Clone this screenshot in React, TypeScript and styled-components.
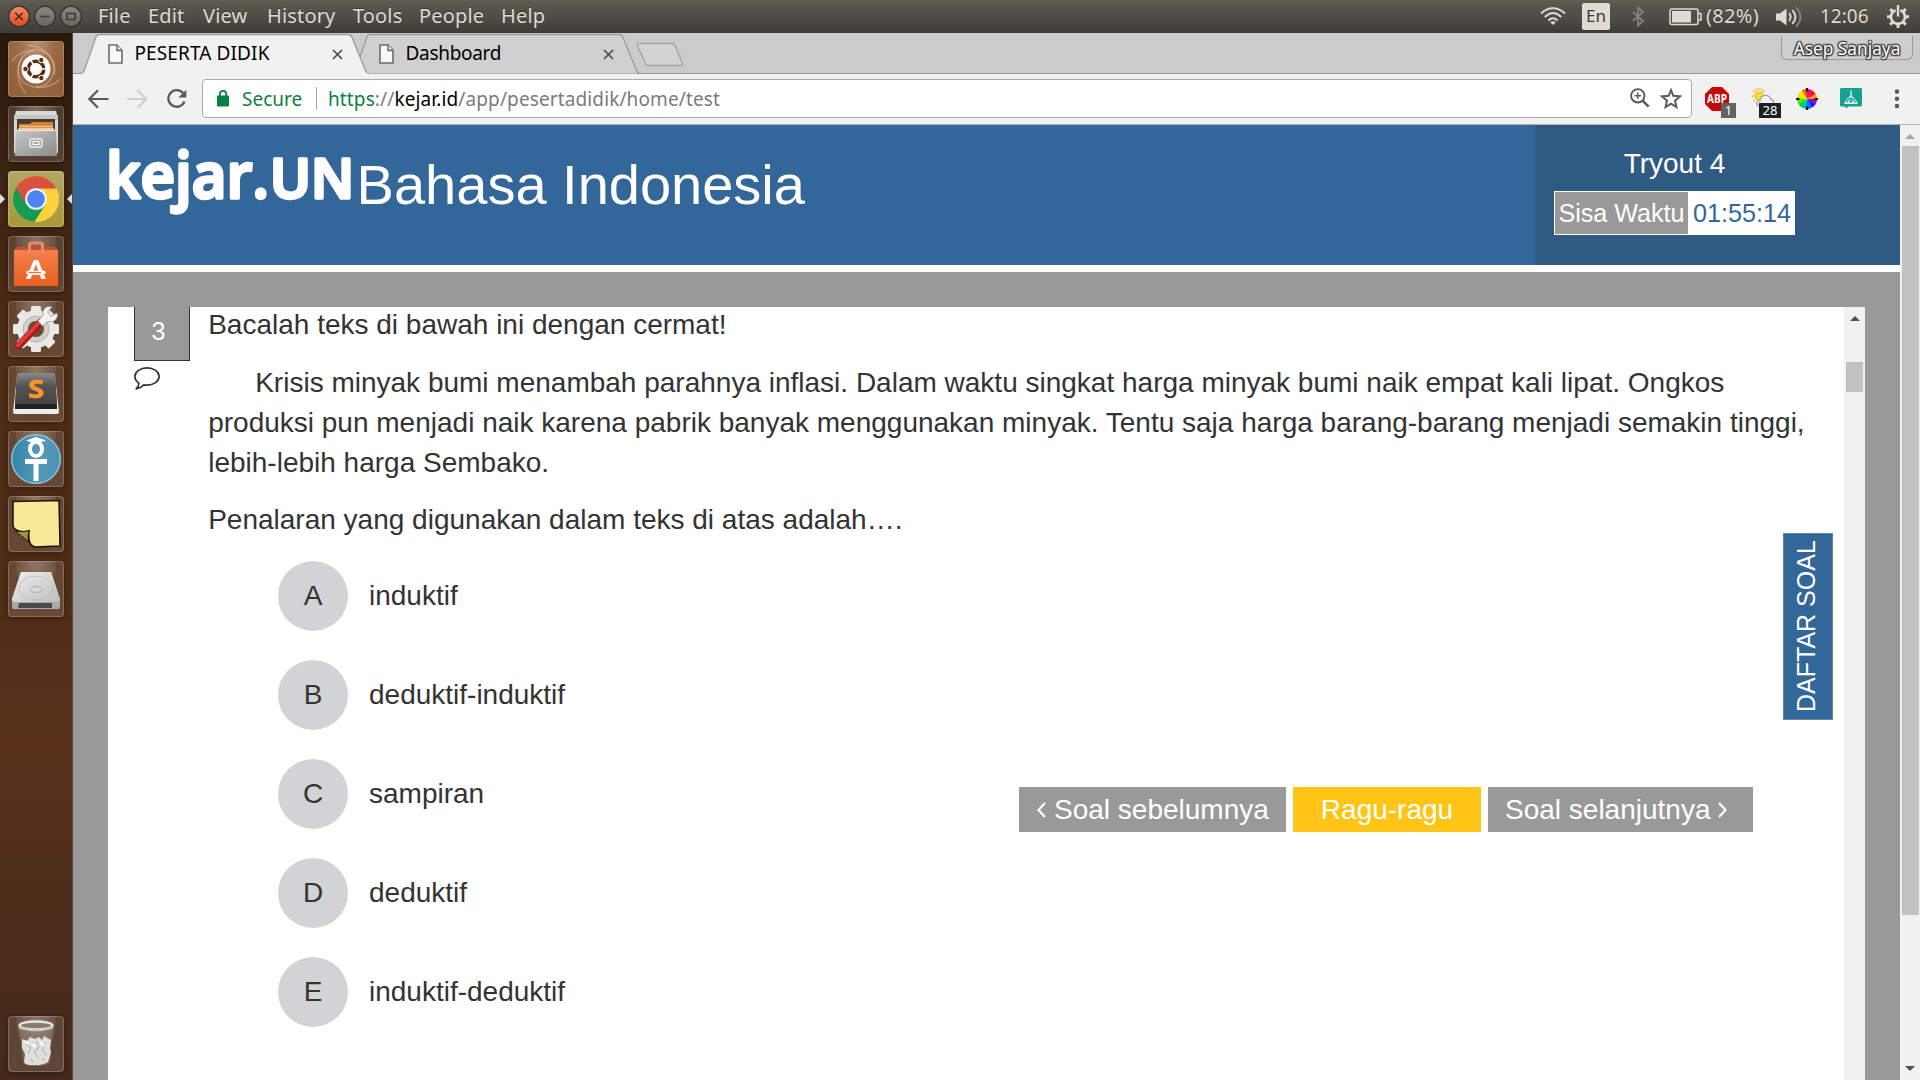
import React from "react";
import styled, { createGlobalStyle, css } from "styled-components";

const uiFont = css`
  font-family: "Noto Sans", "Open Sans", sans-serif;
`;

const Global = createGlobalStyle`
  * { box-sizing: border-box; }
  html, body { margin: 0; padding: 0; overflow: hidden; }
  body { font-family: "Liberation Sans", Arial, sans-serif; background: #fff; }
  button { border: 0; margin: 0; padding: 0; background: none; font: inherit; color: inherit; }
  svg { display: block; flex: none; }
`;

const Desktop = styled.div`
  width: 1920px;
  height: 1080px;
  display: flex;
  flex-direction: column;
  overflow: hidden;
`;

/* ---------- top panel ---------- */

const Panel = styled.header`
  ${uiFont}
  flex: none;
  height: 33px;
  display: flex;
  align-items: center;
  justify-content: space-between;
  padding: 0 11px 0 8px;
  background: linear-gradient(#5f5e50 0%, #5a594d 8%, #4c4a45 60%, #3d3c37 100%);
  color: #dfdbd2;
  text-shadow: 0 -1px 0 rgba(0, 0, 0, 0.35);
`;

const PanelLeft = styled.div`
  display: flex;
  align-items: center;
`;

const WindowButtons = styled.div`
  display: flex;
  gap: 4px;
  margin-right: 16px;
`;

const Menu = styled.nav`
  display: flex;
`;

const MenuItem = styled.span<{ $w: number }>`
  width: ${(p) => p.$w}px;
  font-size: 20px;
  line-height: 30px;
  padding-bottom: 2px;
  letter-spacing: 0.15px;
  white-space: nowrap;
`;

const Tray = styled.div`
  display: flex;
  align-items: center;
`;

const TraySlot = styled.div<{ $w: number }>`
  width: ${(p) => p.$w}px;
  display: flex;
  align-items: center;
  font-size: 19px;
  line-height: 30px;
  white-space: nowrap;
`;

const TrayText = styled.span<{ $size: number; $ls?: number }>`
  padding-bottom: 2px;
  font-size: ${(p) => p.$size}px;
  letter-spacing: ${(p) => p.$ls || 0}px;
`;

const InputBadge = styled.span`
  width: 28px;
  height: 27px;
  border-radius: 2px;
  background: #dfdbd2;
  color: #3c3b37;
  font-size: 17px;
  line-height: 26px;
  text-align: center;
  text-shadow: none;
`;

/* ---------- launcher ---------- */

const Workspace = styled.div`
  flex: 1;
  min-height: 0;
  display: flex;
`;

const Launcher = styled.aside`
  flex: none;
  width: 73px;
  display: flex;
  flex-direction: column;
  justify-content: space-between;
  padding: 8px 8px;
  border-right: 1px solid #58483f;
  background: linear-gradient(#2a190e 0%, #3b2313 12%, #4e2c16 30%, #502d18 55%, #58301a 68%, #4b2d1b 85%, #452a1b 100%);
`;

const LauncherGroup = styled.div`
  display: flex;
  flex-direction: column;
  gap: 9px;
`;

const Tile = styled.div<{ $bg?: string }>`
  position: relative;
  width: 56px;
  height: 56px;
  border-radius: 4px;
  background: ${(p) =>
    p.$bg ||
    "radial-gradient(ellipse at 50% 0%, rgba(255,240,230,.38) 0%, rgba(255,240,230,.2) 50%, rgba(255,240,230,.13) 51%, rgba(255,240,230,.15) 100%)"};
  box-shadow: inset 0 0 0 1px rgba(255, 255, 255, 0.2), 0 1px 5px rgba(0, 0, 0, 0.4);
`;

const Pip = styled.i<{ $side: "left" | "right" }>`
  position: absolute;
  top: 23px;
  ${(p) => (p.$side === "left" ? "left: -8px;" : "right: -8px;")}
  border: 5px solid transparent;
  border-width: 5px 0;
  ${(p) => (p.$side === "left" ? "border-left: 5px solid #e3e0dc;" : "border-right: 5px solid #e3e0dc;")}
`;

/* ---------- browser ---------- */

const Browser = styled.section`
  flex: 1;
  min-width: 0;
  display: flex;
  flex-direction: column;
`;

const TabStrip = styled.div`
  ${uiFont}
  flex: none;
  height: 41px;
  display: flex;
  justify-content: space-between;
  background: #cbcbcb;
  box-shadow: inset 0 -1px 0 #989898;
`;

const Tabs = styled.div`
  display: flex;
  padding-left: 8px;
`;

const Tab = styled.div<{ $active?: boolean }>`
  position: relative;
  z-index: ${(p) => (p.$active ? 1 : 0)};
  width: 288px;
  height: 41px;
  margin-right: -17px;
  display: flex;
  align-items: center;
  padding: 1px 26px 0 27px;
`;

const TabShape = styled.svg`
  position: absolute;
  left: 0;
  top: 0;
  z-index: -1;
`;

const TabTitle = styled.span<{ $ls: number }>`
  flex: 1;
  margin-left: 11.5px;
  padding-bottom: 2px;
  font-size: 19px;
  letter-spacing: ${(p) => p.$ls}px;
  color: #000;
`;

const NewTab = styled.svg`
  margin: 9px 0 0 13px;
`;

const Profile = styled.div`
  width: 132px;
  height: 24px;
  margin: 3px 7px 0 0;
  border: 1px solid #999;
  border-top: 0;
  border-radius: 0 0 6px 6px;
  background: #cecece;
  color: #fff;
  font-size: 17.3px;
  line-height: 25px;
  text-align: center;
  white-space: nowrap;
  text-shadow: 0 0 2px #333, 0 0 2px #333, 1px 1px 1px #444, -1px -1px 1px #444, 1px -1px 1px #444, -1px 1px 1px #444;
`;

const Toolbar = styled.div`
  ${uiFont}
  flex: none;
  height: 51px;
  display: flex;
  align-items: center;
  padding: 0 18px 1px 15px;
  background: #f1f1f1;
  border-bottom: 1px solid #b3b3b3;
`;

const NavButtons = styled.div`
  display: flex;
  align-items: center;
  gap: 18px;
  width: 114px;
`;

const UrlBar = styled.div`
  flex: none;
  width: 1490px;
  height: 39px;
  display: flex;
  align-items: center;
  padding: 0 9px 0 14px;
  border: 1px solid #aaa;
  border-radius: 4px;
  background: #fff;
  font-size: 19px;
  line-height: 36px;
  white-space: nowrap;
`;

const Secure = styled.span`
  width: 74px;
  margin-left: 13px;
  color: #0b8043;
`;

const UrlDivider = styled.i`
  width: 1px;
  height: 23px;
  margin-right: 11px;
  background: #a5a5a5;
`;

const Url = styled.span`
  flex: 1;
  color: #7b7b7b;
  letter-spacing: 0.12px;
`;
const UrlScheme = styled.span`
  color: #0b8043;
`;
const UrlHost = styled.span`
  color: #000;
`;

const UrlIcons = styled.div`
  display: flex;
  gap: 10px;
`;

const Extensions = styled.div`
  flex: 1;
  display: flex;
  align-items: center;
  margin-left: 13px;
`;

const Extension = styled.div<{ $w: number }>`
  position: relative;
  width: ${(p) => p.$w}px;
`;

const Badge = styled.span<{ $bg: string; $x: number; $w: number }>`
  position: absolute;
  left: ${(p) => p.$x}px;
  top: 16px;
  width: ${(p) => p.$w}px;
  height: 15px;
  background: ${(p) => p.$bg};
  color: #fff;
  font-size: 13px;
  line-height: 15px;
  text-align: center;
`;

/* ---------- page ---------- */

const Viewport = styled.div`
  flex: 1;
  min-height: 0;
  display: flex;
`;

const Page = styled.main`
  flex: 1;
  min-width: 0;
  display: flex;
  flex-direction: column;
`;

const PageHeader = styled.div`
  flex: none;
  height: 140px;
  display: flex;
  background: #336799;
  color: #fff;
`;

const Brand = styled.div`
  flex: 1;
  display: flex;
  align-items: flex-start;
  padding: 14px 0 0 33px;
`;

const Subject = styled.h1`
  margin: 14px 0 0 1.6px;
  font-size: 56px;
  line-height: 64px;
  font-weight: 400;
  white-space: nowrap;
`;

const Timer = styled.div`
  width: 365px;
  padding: 19px 105px 0 19px;
  background: #2f5a82;
  text-align: center;
`;

const TryoutName = styled.div`
  font-size: 28px;
  line-height: 40px;
`;

const Remaining = styled.div`
  width: 241px;
  height: 44px;
  margin-top: 7px;
  display: flex;
  border: 1px solid #fff;
  background: #fff;
  font-size: 25.2px;
  line-height: 42px;
  white-space: nowrap;
`;

const RemainingLabel = styled.span`
  width: 133px;
  background: #999;
  letter-spacing: -0.05px;
`;

const RemainingTime = styled.span`
  flex: 1;
  padding-left: 2px;
  color: #336799;
`;

const Body = styled.div`
  flex: 1;
  min-height: 0;
  margin-top: 7px;
  padding: 35px 35px 0;
  background: #999;
  display: flex;
`;

const QuestionPanel = styled.section`
  position: relative;
  flex: 1;
  display: flex;
  background: #fff;
  color: #333;
  font-size: 28px;
  line-height: 40px;
`;

const Gutter = styled.div`
  flex: none;
  width: 100px;
  padding-left: 26px;
`;

const QuestionNumber = styled.div`
  width: 56px;
  height: 54px;
  margin-bottom: 6px;
  border: 1px solid #333;
  border-top: 0;
  background: #999;
  color: #fff;
  font-size: 25.2px;
  line-height: 48px;
  padding-left: 16.5px;
`;

const Question = styled.div`
  flex: 1;
  margin-top: -2px;
`;

const Paragraph = styled.p<{ $indent?: boolean }>`
  width: 1614px;
  margin: 0 0 17.6px;
  padding-left: 0.2px;
  text-indent: ${(p) => (p.$indent ? 47 : 0)}px;
`;

const Options = styled.ol`
  margin: 0;
  padding: 3px 0 0 70px;
  list-style: none;
  display: flex;
  flex-direction: column;
  gap: 29px;
`;

const Option = styled.li`
  display: flex;
  align-items: center;
  gap: 21px;
`;

const Letter = styled.span`
  width: 70px;
  height: 70px;
  border-radius: 50%;
  background: #d1d3d4;
  text-align: center;
  line-height: 69px;
`;

const OptionText = styled.span`
  line-height: 69px;
  height: 70px;
`;

const SideTab = styled.button`
  position: absolute;
  left: 1675px;
  top: 226px;
  width: 50px;
  height: 187px;
  display: flex;
  align-items: center;
  justify-content: center;
  padding: 1px 0 0 4px;
  background: #336799;
  box-shadow: inset 0 0 0 1px #5b86ae;
  color: #fff;
  font-size: 25px;
  line-height: 48px;
  white-space: nowrap;
  writing-mode: vertical-rl;
  transform: rotate(180deg);
`;

const QuestionNav = styled.div`
  position: absolute;
  left: 911px;
  top: 480px;
  display: flex;
  gap: 7px;
`;

const NavButton = styled.button<{ $w: number; $bg?: string; $pad?: number }>`
  width: ${(p) => p.$w}px;
  height: 45px;
  display: flex;
  align-items: center;
  justify-content: ${(p) => (p.$pad ? "flex-start" : "center")};
  padding-left: ${(p) => p.$pad || 0}px;
  gap: 8px;
  background: ${(p) => p.$bg || "#999"};
  color: #fff;
  line-height: 45px;
  white-space: nowrap;
`;

const Scrollbar = styled.div<{ $w: number; $gap: number }>`
  flex: none;
  width: ${(p) => p.$w}px;
  display: flex;
  flex-direction: column;
  align-items: center;
  padding-top: ${(p) => p.$gap}px;
  background: #f1f1f1;
`;

const Thumb = styled.i<{ $h: number; $mt: number }>`
  width: 17px;
  height: ${(p) => p.$h}px;
  margin-top: ${(p) => p.$mt}px;
  background: #c1c1c1;
`;

const ScrollDown = styled.div`
  margin-top: auto;
  margin-bottom: 9px;
`;

const Arrow = ({ color, down }: { color: string; down?: boolean }) => (
  <svg width="10" height="5" viewBox="0 0 10 5">
    <path d={down ? "M0 0H10L5 5Z" : "M0 5H10L5 0Z"} fill={color} />
  </svg>
);

/* ---------- drawings ---------- */

const WindowButton = ({ kind }: { kind: "close" | "min" | "max" }) => (
  <svg width="22" height="24" viewBox="0 0 22 24">
    <defs>
      <linearGradient id={`wb-${kind}`} x1="0" y1="0" x2="0" y2="1">
        <stop offset="0" stopColor={kind === "close" ? "#f58a66" : "#8a887e"} />
        <stop offset="1" stopColor={kind === "close" ? "#df4d1c" : "#67655e"} />
      </linearGradient>
    </defs>
    <circle cx="11" cy="11.5" r="10.3" fill={`url(#wb-${kind})`} stroke="#34332e" strokeWidth="1.2" />
    <g fill="none" stroke={kind === "close" ? "#4a2a1d" : "#3f3e39"} strokeWidth="1.6">
      {kind === "close" && <path d="M7.2 7.7L14.8 15.3M14.8 7.7L7.2 15.3" />}
      {kind === "min" && <path d="M6.5 11.5H15.5" />}
      {kind === "max" && <rect x="6.8" y="8.5" width="8.4" height="6" />}
    </g>
  </svg>
);

const Wifi = () => (
  <svg width="26" height="19" viewBox="0 0 26 19" fill="none" stroke="#dfdbd2" strokeWidth="2">
    <path d="M1 6.5C8-.6 18-.6 25 6.5" />
    <path d="M4.8 10C10 5 16 5 21.2 10" />
    <path d="M8.4 13.4C11.4 10.7 14.6 10.7 17.6 13.4" />
    <path d="M13 18L10.2 15.2C12 13.9 14 13.9 15.8 15.2Z" fill="#dfdbd2" stroke="none" />
  </svg>
);

const Bluetooth = () => (
  <svg width="12" height="21" viewBox="0 0 12 21" fill="none" stroke="#85837b" strokeWidth="1.8">
    <path d="M1 6L11 15L6 19.5V1.5L11 6L1 15" />
  </svg>
);

const Battery = () => (
  <svg width="33" height="18" viewBox="0 0 33 18">
    <rect x="1" y="1" width="28" height="15.5" rx="2" fill="none" stroke="#dfdbd2" strokeWidth="1.5" />
    <rect x="3" y="3" width="19" height="11.5" fill="#dfdbd2" />
    <path d="M29.5 5.5H32V12H29.5" fill="none" stroke="#dfdbd2" strokeWidth="1.5" />
  </svg>
);

const Speaker = () => (
  <svg width="28" height="22" viewBox="0 0 28 22" fill="none" strokeWidth="1.9">
    <path d="M1 7.5H5L11.5 2.5V19.5L5 14.5H1Z" fill="#dfdbd2" />
    <path d="M14 7.2C16.2 9.4 16.2 12.6 14 14.8" stroke="#dfdbd2" />
    <path d="M17.2 4.2C21.4 8 21.4 14 17.2 17.8" stroke="#dfdbd2" />
    <path d="M20.8 1.4C27 7 27 15 20.8 20.6" stroke="#85837b" />
  </svg>
);

const Session = () => (
  <svg width="22" height="23" viewBox="0 0 22 23" fill="none" stroke="#dfdbd2">
    <path d="M8.6 5.2A7 7 0 1 0 13.4 5.2" strokeWidth="2.6" />
    <path d="M11 0V11.5" strokeWidth="2.4" />
    <path d="M11 19V23M0 11.8H3.6M18.4 11.8H22M3.2 4L5.8 6.6M18.8 4L16.2 6.6M3.2 19.6L5.8 17M18.8 19.6L16.2 17" strokeWidth="3" />
  </svg>
);

const FileIcon = () => (
  <svg width="15" height="20" viewBox="0 0 15 20" fill="#f8f8f8" stroke="#6b6b6b" strokeWidth="1.6">
    <path d="M1 1H9L14 6.4V19H1Z" />
    <path d="M9 1V6.4H14" />
  </svg>
);

const CloseIcon = () => (
  <svg width="11" height="11" viewBox="0 0 11 11" stroke="#4c4c4c" strokeWidth="1.7">
    <path d="M1 1L10 10M10 1L1 10" />
  </svg>
);

const TabBackground = ({ active }: { active?: boolean }) => (
  <TabShape width="288" height="41" viewBox="0 0 288 41">
    <path
      d="M0 40.5C2 40.2 2.6 39 3.2 37.5L15 4C15.8 2 16.5 1.5 18 1.5H267C269 1.5 270 2 270.8 4L284.5 37.5C285.2 39.4 286 40.4 288 40.5"
      fill={active ? "#f1f1f1" : "#d0d0d0"}
      stroke="#9b9b9b"
      strokeWidth="1.3"
    />
    {active && <path d="M1.5 40.5H286.5" stroke="#f1f1f1" strokeWidth="1.4" />}
  </TabShape>
);

const BackIcon = ({ color, flip }: { color: string; flip?: boolean }) => (
  <svg width="21" height="20" viewBox="0 0 21 20" fill="none" stroke={color} strokeWidth="2.2">
    <path d={flip ? "M0 10H19M10.5 1.2L19.2 10L10.5 18.8" : "M20.5 10H1.5M10 1.2L1.3 10L10 18.8"} />
  </svg>
);

const ReloadIcon = () => (
  <svg width="21" height="20" viewBox="0 0 21 20">
    <path d="M17.2 4.3A8.3 8.3 0 1 0 18.4 12.5" fill="none" stroke="#5a5a5a" strokeWidth="2.3" />
    <path d="M20.3 .8V8.6H12.4Z" fill="#5a5a5a" />
  </svg>
);

const Lock = () => (
  <svg width="12" height="17" viewBox="0 0 12 17">
    <rect x="0" y="5.5" width="12" height="11" rx="1" fill="#0b8043" />
    <path d="M2.8 6V4A3.2 3.2 0 0 1 9.2 4V6" fill="none" stroke="#0b8043" strokeWidth="1.8" />
  </svg>
);

const ZoomIcon = () => (
  <svg width="20" height="20" viewBox="0 0 20 20" fill="none" stroke="#5a5a5a">
    <circle cx="7.8" cy="7.8" r="6.7" strokeWidth="1.9" />
    <path d="M12.6 12.6L18.6 18.6" strokeWidth="2.6" />
    <path d="M7.8 4.6V11M4.6 7.8H11" strokeWidth="1.4" />
  </svg>
);

const StarIcon = () => (
  <svg width="22" height="21" viewBox="0 0 21 20" fill="none" stroke="#5a5a5a" strokeWidth="1.9">
    <path d="M10.5 2L12.7 7.4L19 8L14.3 12.1L15.7 18.2L10.5 15L5.3 18.2L6.7 12.1L2 8L8.3 7.4Z" />
  </svg>
);

const Adblock = () => (
  <svg width="24" height="24" viewBox="0 0 24 24">
    <path d="M7 0H17L24 7V17L17 24H7L0 17V7Z" fill="#cc0606" />
    <text x="2" y="16" fontFamily="Noto Sans, sans-serif" fontWeight="700" fontSize="12" fill="#fff" textLength="20" lengthAdjust="spacingAndGlyphs">ABP</text>
  </svg>
);

const Weather = () => (
  <svg width="24" height="24" viewBox="0 0 24 24">
    <path d="M8 1V3.5M2.5 3.5L4.5 5.3M.5 9H3M2 14.5L4 13M13.500 3.5L11.500 5.3M5 1.5L6 3.8M11 1.5L10 3.8" stroke="#fbbc18" strokeWidth="1.3" />
    <circle cx="8.2" cy="9" r="4" fill="#fde047" stroke="#f5a513" strokeWidth="1" />
    <path d="M7 18.500C4.500 17.500 5.500 13.500 9 13.800C9.500 7.500 18 6.500 19.500 12C23.500 12.500 23.500 18.500 20 18.500Z" fill="#f1f1f1" stroke="#a3a3a3" strokeWidth="1.3" />
  </svg>
);

const wheelColors = ["#ff1020", "#ff5a00", "#ff9a00", "#ffe600", "#c8f000", "#5fe000", "#00d830", "#00b8d0", "#0070ff", "#3010ff", "#a000e0", "#f000a0"];

/* hues in drawing order, clockwise from the top */
const wheelOrder = [11, 0, 2, 10, 9, 8, 7, 6, 5, 4, 3, 1];

/* point on a circle of radius 10, measured clockwise from the top */
const rim = (deg: number) => {
  const a = (deg * Math.PI) / 180;
  return `${(10 * Math.sin(a)).toFixed(2)} ${(-10 * Math.cos(a)).toFixed(2)}`;
};

const ColorWheel = () => (
  <svg width="22" height="22" viewBox="-11 -11 22 22">
    {wheelOrder.map((c, i) => (
      <path key={i} fill={wheelColors[c]} d={`M0 0L${rim(i * 30)}A10 10 0 0 1 ${rim(i * 30 + 31)}Z`} />
    ))}
    <path d="M0 -11V-7.5M0 7.5V11M-11 0H-7.5M7.5 0H11" stroke="#111" strokeWidth="2.2" />
  </svg>
);

const TealExt = () => (
  <svg width="22" height="22" viewBox="0 0 22 22">
    <path d="M1.5 0H20.5Q22 0 22 1.5V17Q22 18.5 20.5 18.5H8L6.2 20.5L4.8 18.5H1.5Q0 18.5 0 17V1.5Q0 0 1.5 0Z" fill="#16a290" />
    <path d="M11 2.5V8" stroke="#e8f6f4" strokeWidth="1.3" />
    <path d="M4 16C5.5 12 8 9.5 11 7C14 9.5 16.5 12 18 16Z" fill="#d8f1ed" />
    <path d="M7 14.5A4 4 0 0 1 15 14.5" fill="none" stroke="#16a290" strokeWidth="1.4" />
    <circle cx="11" cy="13" r="1.6" fill="#16a290" />
  </svg>
);

const Dots = () => (
  <svg width="6" height="20" viewBox="0 0 6 20" fill="#5a5a5a">
    <circle cx="3" cy="2.6" r="2.3" />
    <circle cx="3" cy="9.8" r="2.3" />
    <circle cx="3" cy="17" r="2.3" />
  </svg>
);

const Logo = () => (
  <svg width="249" height="84" viewBox="0 0 249 84" fill="#fff" stroke="#fff" strokeWidth="3.4" strokeLinejoin="round" fontFamily="Open Sans, Noto Sans, sans-serif" fontWeight="600">
    <text x="0" y="59" fontSize="64" textLength="163" lengthAdjust="spacingAndGlyphs">kejar.</text>
    <text x="164" y="59" fontSize="55" textLength="84" lengthAdjust="spacingAndGlyphs">UN</text>
  </svg>
);

const Comment = () => (
  <svg width="26" height="23" viewBox="0 0 26 23" fill="none" stroke="#333" strokeWidth="1.7" strokeLinejoin="round">
    <path d="M13 .9C19.7 .9 25.1 4.7 25.1 9.5C25.1 14.3 19.7 18.1 13 18.1C11.9 18.1 10.8 18 9.8 17.8C7.8 19.9 5.2 21.3 2.2 21.8C3.7 20.4 4.8 18.6 5 16.2C2.5 14.6 .9 12.2 .9 9.5C.9 4.7 6.3 .9 13 .9Z" />
  </svg>
);

const Chevron = ({ right }: { right?: boolean }) => (
  <svg width="9" height="18" viewBox="0 0 9 18" fill="none" stroke="#fff" strokeWidth="2.2">
    <path d={right ? "M1 2L7.6 9L1 16" : "M8 2L1.4 9L8 16"} />
  </svg>
);

const TileArt = ({ children }: { children: React.ReactNode }) => (
  <svg width="56" height="56" viewBox="0 0 56 56">
    {children}
  </svg>
);

const DashArt = () => (
  <TileArt>
    <g fill="none" stroke="#e8c8ae" strokeOpacity=".45" strokeWidth="1.3">
      <path d="M4 20C14 6 40 4 45 22C48 36 40 46 28 46" />
      <path d="M20 4C38 6 50 20 46 34" />
      <path d="M52 38C42 50 16 50 11 34C8 22 14 12 26 10" />
      <path d="M18 52C8 42 8 26 14 18" />
    </g>
    <circle cx="28" cy="28" r="14.5" fill="#fff" />
    <circle cx="28" cy="28" r="7.8" fill="none" stroke="#5a2d0c" strokeWidth="3.6" />
    <path d="M28 28L38 28M28 28L23 19.5M28 28L23 36.5" stroke="#fff" strokeWidth="1.5" />
    <circle cx="28" cy="28" r="5.8" fill="#fff" />
    <g fill="#5a2d0c" stroke="#fff" strokeWidth="1">
      <circle cx="17.5" cy="28" r="2.7" />
      <circle cx="33.3" cy="19" r="2.7" />
      <circle cx="33.3" cy="37" r="2.7" />
    </g>
  </TileArt>
);

const FilesArt = () => (
  <TileArt>
    <defs>
      <linearGradient id="cab" x1="0" y1="0" x2="1" y2="1">
        <stop offset="0" stopColor="#c8c8c8" />
        <stop offset="1" stopColor="#8b8b8b" />
      </linearGradient>
    </defs>
    <path d="M8 5H48L50 13V47H6V13Z" fill="#d9d9d9" />
    <path d="M6 9H50V14H6Z" fill="#c4c4c4" />
    <rect x="9" y="13" width="38" height="14" fill="#4a3a30" />
    <path d="M11 24V18H22L24 16H45V24Z" fill="#d98032" />
    <path d="M11 20.5H45" stroke="#f2c088" strokeWidth="1.3" />
    <path d="M10 23H46" stroke="#f6e4c8" strokeWidth="1.5" />
    <path d="M8 24H48L49 50H7Z" fill="url(#cab)" />
    <path d="M8 24.5H48" stroke="#ececec" />
    <rect x="22" y="33" width="12" height="8" rx="1.5" fill="#a8a8a8" stroke="#ececec" strokeWidth="1.6" />
    <rect x="25" y="35.5" width="6" height="3" fill="none" stroke="#fff" />
  </TileArt>
);

const ChromeArt = () => (
  <TileArt>
    <circle cx="28" cy="28" r="23" fill="#fdd03d" />
    <path d="M28 28L8.1 16.5A23 23 0 0 0 26.5 50.9L38 33.5Z" fill="#169b57" />
    <path d="M28 28L18 33.5L8.1 16.5A23 23 0 0 1 48.6 17.8H28Z" fill="#d9513f" />
    <path d="M28 17.8H48.6A23 23 0 0 1 26.5 50.9L37.5 33.5Z" fill="#fdd03d" />
    <circle cx="28" cy="28" r="10.8" fill="#f4f4f4" />
    <circle cx="28" cy="28" r="8.8" fill="#4a86f0" />
  </TileArt>
);

const SoftwareArt = () => (
  <TileArt>
    <defs>
      <linearGradient id="bag" x1="0" y1="0" x2="0" y2="1">
        <stop offset="0" stopColor="#f58050" />
        <stop offset="1" stopColor="#e95f1c" />
      </linearGradient>
    </defs>
    <path d="M8 11H48L50 15H6Z" fill="#c14f30" />
    <rect x="6" y="14" width="44" height="36" fill="url(#bag)" />
    <path d="M21.5 18V9.5Q21.5 7 24 7H32Q34.5 7 34.5 9.5V18" fill="none" stroke="#ef8664" strokeWidth="3" />
    <text x="28" y="43" textAnchor="middle" fontFamily="Lato, sans-serif" fontWeight="900" fontSize="27" fill="#fff">A</text>
    <path d="M20 36.5H36" stroke="#fff" strokeWidth="3.6" strokeLinecap="round" />
    <path d="M20.5 36.5H33" stroke="#ee6c32" strokeWidth="1.2" />
  </TileArt>
);

const SettingsArt = () => (
  <TileArt>
    <g fill="#e9e9e7">
      {[0, 45, 90, 135].map((a) => (
        <rect key={a} x="23" y="5" width="10" height="46" rx="1.5" transform={`rotate(${a} 28 28)`} />
      ))}
      <circle cx="28" cy="28" r="19" />
    </g>
    <circle cx="28" cy="28" r="13" fill="#d0d0ce" stroke="#b5b5b3" />
    <circle cx="28" cy="28" r="8" fill="#6b4a35" />
    <path d="M10.5 45L33 21" stroke="#a81c1c" strokeWidth="7.5" strokeLinecap="round" />
    <path d="M10 44L32 20.5" stroke="#dd3f3f" strokeWidth="4" strokeLinecap="round" />
    <path d="M30 20L35 14C34 9 38 4 44 6L39.5 11L43 15.5L49 12C51 18 45 22 40 20.5L34.5 25Z" fill="#f4f4f4" stroke="#999" strokeWidth=".9" />
  </TileArt>
);

const SublimeArt = () => (
  <TileArt>
    <defs>
      <linearGradient id="key" x1="0" y1="0" x2="0" y2="1">
        <stop offset="0" stopColor="#8c8c8c" />
        <stop offset=".4" stopColor="#555" />
        <stop offset="1" stopColor="#444" />
      </linearGradient>
    </defs>
    <path d="M9 10H47L51 46Q51 48 49 48H7Q5 48 5 46Z" fill="#ececec" />
    <path d="M11 8H45Q47 8 47 10L49 40V43H7V40L9 10Q9 8 11 8Z" fill="#222" />
    <path d="M11 7H45Q47 7 47 9L49 38H7L9 9Q9 7 11 7Z" fill="url(#key)" />
    <text x="20" y="32" textLength="16" lengthAdjust="spacingAndGlyphs" fontFamily="Open Sans, sans-serif" fontWeight="700" fontSize="25" fill="#fb9325" stroke="#fb9325" strokeWidth=".6">S</text>
  </TileArt>
);

const OtArt = () => (
  <TileArt>
    <defs>
      <linearGradient id="ot" x1="0" y1="0" x2="1" y2="0">
        <stop offset="0" stopColor="#3484ab" />
        <stop offset=".6" stopColor="#5599b8" />
        <stop offset="1" stopColor="#4a93b5" />
      </linearGradient>
    </defs>
    <circle cx="28" cy="28" r="24.3" fill="url(#ot)" stroke="#86c3d9" strokeWidth="1.5" />
    <ellipse cx="28" cy="18" rx="6" ry="7" fill="none" stroke="#fff" strokeWidth="4" />
    <path d="M28 6L38 9.5L28 13L18 9.5Z" fill="#fff" />
    <path d="M17 30.5H39M28 29V50" stroke="#fff" strokeWidth="5" />
  </TileArt>
);

const NoteArt = () => (
  <TileArt>
    <path d="M5 5.5L51 4.5L52 50L27 51C22 50 20 45 21 35C15 37 5 35 5 29Z" fill="#f8e997" stroke="#15130c" strokeWidth="1.5" />
    <path d="M7 34C10 38 16 42 21 46C19.5 42 20 38 21.5 34.5C16 36 10 36 7 34Z" fill="#a59238" stroke="#15130c" />
  </TileArt>
);

const DiskArt = () => (
  <TileArt>
    <defs>
      <linearGradient id="disk" x1="0" y1="0" x2="1" y2="1">
        <stop offset="0" stopColor="#f0f0f0" />
        <stop offset="1" stopColor="#bdbdbd" />
      </linearGradient>
    </defs>
    <path d="M13 11H43L52 38V46Q52 48 50 48H6Q4 48 4 46V38Z" fill="#a9a9a9" />
    <path d="M13 11H43L52 38Q52 41 49 41H7Q4 41 4 38Z" fill="url(#disk)" />
    <ellipse cx="28" cy="27" rx="17" ry="12" fill="none" stroke="#c2c2c2" />
    <ellipse cx="28" cy="28.5" rx="6" ry="3" fill="#dadada" stroke="#aaa" />
    <path d="M11 42H44V47H10Z" fill="#4a4a4a" />
  </TileArt>
);

const TrashArt = () => (
  <TileArt>
    <path d="M11 11L15 46Q15 50 28 50Q41 50 42 46L45 11Z" fill="#d8d0c8" fillOpacity=".2" />
    <path d="M14 23L19 25L22 21L27 23L31 21L34 24L36 20L43 24L42 32L43 37L40 46Q34 50 28 49Q18 50 16 46L17 38L14 32Z" fill="#dfe0dc" />
    <path d="M18 28L23 32L20 38M28 25L31 31L26 36L30 42M37 27L34 34L39 39M22 43L26 46M34 42L37 45" fill="none" stroke="#bbbcb7" strokeWidth="1.3" />
    <path d="M17 25L21 28M24 29L28 30M32 26L36 30" stroke="#fff" strokeWidth="2" />
    <ellipse cx="28" cy="9.5" rx="16.5" ry="4" fill="#8b8078" fillOpacity=".8" stroke="#e6e6e2" strokeWidth="2.4" />
    <path d="M11 11.500Q28 17 45 11.500" fill="none" stroke="#c7c7c3" strokeWidth="2.2" />
  </TileArt>
);

/* ---------- data ---------- */

const menu: [string, number][] = [
  ["File", 50],
  ["Edit", 55],
  ["View", 64],
  ["History", 86],
  ["Tools", 66],
  ["People", 82],
  ["Help", 50],
];

const options = ["induktif", "deduktif-induktif", "sampiran", "deduktif", "induktif-deduktif"];

export default function App() {
  return (
    <Desktop>
      <Global />
      <Panel>
        <PanelLeft>
          <WindowButtons>
            <WindowButton kind="close" />
            <WindowButton kind="min" />
            <WindowButton kind="max" />
          </WindowButtons>
          <Menu>
            {menu.map(([label, w]) => (
              <MenuItem key={label} $w={w}>{label}</MenuItem>
            ))}
          </Menu>
        </PanelLeft>
        <Tray>
          <TraySlot $w={42}><Wifi /></TraySlot>
          <TraySlot $w={50}><InputBadge>En</InputBadge></TraySlot>
          <TraySlot $w={37}><Bluetooth /></TraySlot>
          <TraySlot $w={37}><Battery /></TraySlot>
          <TraySlot $w={69}><TrayText $size={20} $ls={0.3}>(82%)</TrayText></TraySlot>
          <TraySlot $w={45}><Speaker /></TraySlot>
          <TraySlot $w={67}><TrayText $size={19}>12:06</TrayText></TraySlot>
          <Session />
        </Tray>
      </Panel>

      <Workspace>
        <Launcher>
          <LauncherGroup>
            <Tile $bg="radial-gradient(ellipse at 50% 0%, #b98f70 0%, #9a6a45 50%, #8f5d38 100%)"><DashArt /></Tile>
            <Tile><FilesArt /></Tile>
            <Tile $bg="linear-gradient(#b3a765, #a8983a)">
              <ChromeArt />
              <Pip $side="left" />
              <Pip $side="right" />
            </Tile>
            <Tile><SoftwareArt /></Tile>
            <Tile><SettingsArt /></Tile>
            <Tile><SublimeArt /></Tile>
            <Tile><OtArt /></Tile>
            <Tile><NoteArt /></Tile>
            <Tile><DiskArt /></Tile>
          </LauncherGroup>
          <Tile><TrashArt /></Tile>
        </Launcher>

        <Browser>
          <TabStrip>
            <Tabs>
              <Tab $active>
                <TabBackground active />
                <FileIcon />
                <TabTitle $ls={0.11}>PESERTA DIDIK</TabTitle>
                <CloseIcon />
              </Tab>
              <Tab>
                <TabBackground />
                <FileIcon />
                <TabTitle $ls={-0.3}>Dashboard</TabTitle>
                <CloseIcon />
              </Tab>
              <NewTab width="48" height="25" viewBox="0 0 48 25">
                <path d="M3 1.5H36Q38 1.5 39 3.5L46.5 21.5Q47.3 23.5 45 23.5H12Q10.5 23.5 9.5 21.5L1.3 3.5Q.8 1.5 3 1.5Z" fill="#d3d3d3" stroke="#a2a2a2" strokeWidth="1.3" />
              </NewTab>
            </Tabs>
            <Profile>Asep Sanjaya</Profile>
          </TabStrip>

          <Toolbar>
            <NavButtons>
              <BackIcon color="#5a5a5a" />
              <BackIcon color="#cfcfcf" flip />
              <ReloadIcon />
            </NavButtons>
            <UrlBar>
              <Lock />
              <Secure>Secure</Secure>
              <UrlDivider />
              <Url>
                <UrlScheme>https</UrlScheme>://<UrlHost>kejar.id</UrlHost>/app/pesertadidik/home/test
              </Url>
              <UrlIcons>
                <ZoomIcon />
                <StarIcon />
              </UrlIcons>
            </UrlBar>
            <Extensions>
              <Extension $w={46}>
                <Adblock />
                <Badge $bg="#636363" $x={16} $w={15}>1</Badge>
              </Extension>
              <Extension $w={45}>
                <Weather />
                <Badge $bg="#1f1f1f" $x={8} $w={22}>28</Badge>
              </Extension>
              <Extension $w={44}><ColorWheel /></Extension>
              <Extension $w={54}><TealExt /></Extension>
              <Dots />
            </Extensions>
          </Toolbar>

          <Viewport>
            <Page>
              <PageHeader>
                <Brand>
                  <Logo />
                  <Subject>Bahasa Indonesia</Subject>
                </Brand>
                <Timer>
                  <TryoutName>Tryout 4</TryoutName>
                  <Remaining>
                    <RemainingLabel>Sisa Waktu</RemainingLabel>
                    <RemainingTime>01:55:14</RemainingTime>
                  </Remaining>
                </Timer>
              </PageHeader>
              <Body>
                <QuestionPanel>
                  <Gutter>
                    <QuestionNumber>3</QuestionNumber>
                    <Comment />
                  </Gutter>
                  <Question>
                    <Paragraph>Bacalah teks di bawah ini dengan cermat!</Paragraph>
                    <Paragraph $indent>
                      Krisis minyak bumi menambah parahnya inflasi. Dalam waktu singkat harga minyak bumi naik empat kali lipat. Ongkos
                      produksi pun menjadi naik karena pabrik banyak menggunakan minyak. Tentu saja harga barang-barang menjadi semakin
                      tinggi, lebih-lebih harga Sembako.
                    </Paragraph>
                    <Paragraph>Penalaran yang digunakan dalam teks di atas adalah….</Paragraph>
                    <Options>
                      {options.map((text, i) => (
                        <Option key={text}>
                          <Letter>{"ABCDE"[i]}</Letter>
                          <OptionText>{text}</OptionText>
                        </Option>
                      ))}
                    </Options>
                  </Question>
                  <Scrollbar $w={21} $gap={9}>
                    <Arrow color="#505050" />
                    <Thumb $h={30} $mt={41} />
                  </Scrollbar>
                  <SideTab>DAFTAR SOAL</SideTab>
                  <QuestionNav>
                    <NavButton $w={267} $pad={18}><Chevron />Soal sebelumnya</NavButton>
                    <NavButton $w={188} $bg="#fec416">Ragu-ragu</NavButton>
                    <NavButton $w={265} $pad={17}>Soal selanjutnya<Chevron right /></NavButton>
                  </QuestionNav>
                </QuestionPanel>
              </Body>
            </Page>
            <Scrollbar $w={20} $gap={9}>
              <Arrow color="#a3a3a3" />
              <Thumb $h={769} $mt={7} />
              <ScrollDown><Arrow color="#505050" down /></ScrollDown>
            </Scrollbar>
          </Viewport>
        </Browser>
      </Workspace>
    </Desktop>
  );
}
